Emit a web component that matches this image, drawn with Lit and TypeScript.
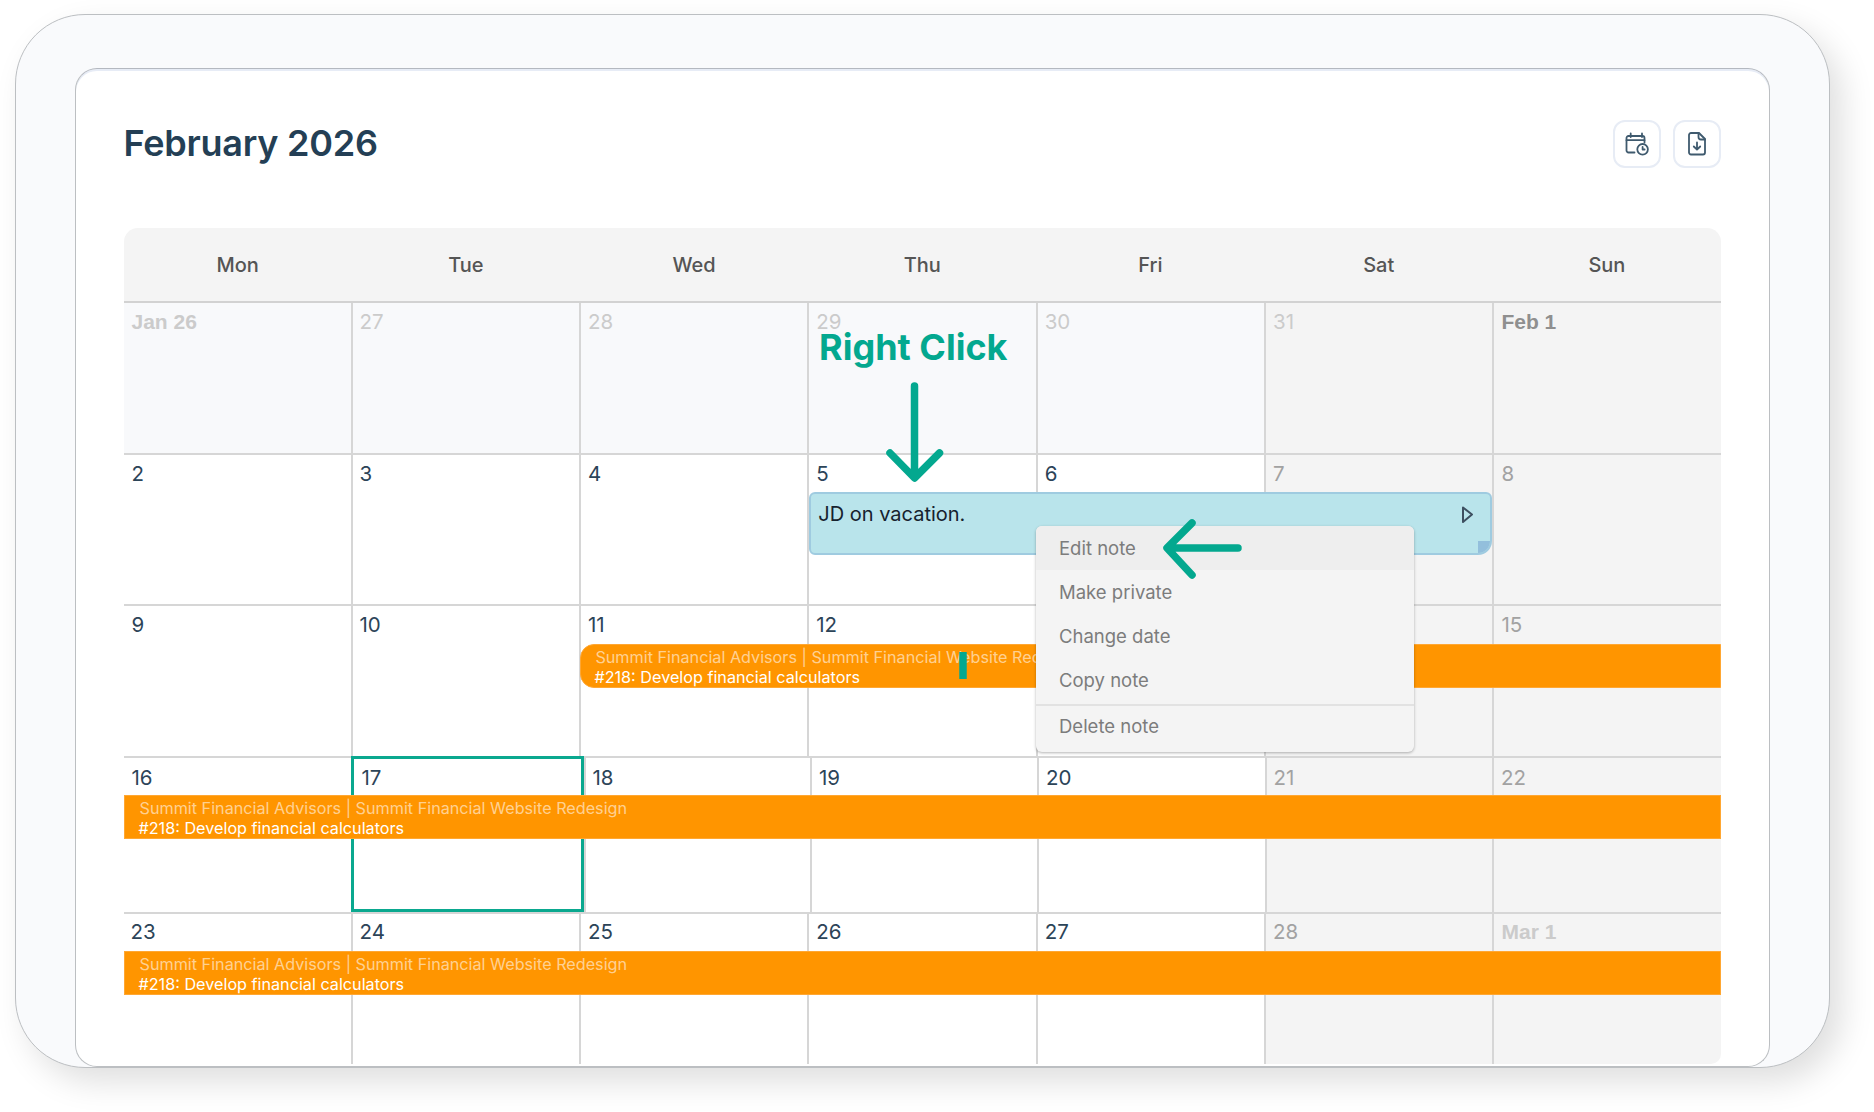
import { html, css, LitElement } from 'lit';
import { customElement } from 'lit/decorators.js';
import { classMap } from 'lit/directives/class-map.js';

type Day = { label: string; tone?: 'muted' | 'weekend' | 'lead'; bold?: boolean; shade?: 'prev' | 'end'; today?: boolean };

const DAYS = ['Mon', 'Tue', 'Wed', 'Thu', 'Fri', 'Sat', 'Sun'];
const MENU = ['Edit note', 'Make private', 'Change date', 'Copy note'];

const wk = (n: number): Day[] =>
  Array.from({ length: 7 }, (_, i) => ({
    label: String(n + i),
    ...(i > 4 ? { tone: 'weekend' as const, shade: 'end' as const } : {}),
  }));

const WEEKS: Day[][] = [
  [
    { label: 'Jan 26', tone: 'muted', bold: true, shade: 'prev' },
    { label: '27', tone: 'muted', shade: 'prev' },
    { label: '28', tone: 'muted', shade: 'prev' },
    { label: '29', tone: 'muted', shade: 'prev' },
    { label: '30', tone: 'muted', shade: 'prev' },
    { label: '31', tone: 'muted', shade: 'end' },
    { label: 'Feb 1', tone: 'lead', bold: true, shade: 'end' },
  ],
  wk(2),
  wk(9),
  wk(16).map((d) => (d.label === '17' ? { ...d, today: true } : d)),
  [...wk(23).slice(0, 6), { label: 'Mar 1', tone: 'muted', bold: true, shade: 'end' }],
];

@customElement('app-root')
export class AppRoot extends LitElement {
  static styles = css`
    :host {
      display: block;
      width: 1874px;
      height: 1112px;
      background: #fff;
      font-family: Inter, 'Liberation Sans', sans-serif;
      overflow: hidden;
    }

    .stage {
      position: relative;
      padding: 14px 0 0 15px;
    }

    .frame {
      box-sizing: border-box;
      width: 1815px;
      height: 1054px;
      padding: 53px 59px 0;
      background: #f9fafc;
      border: 1px solid #bcbfc2;
      border-radius: 70px;
      box-shadow: 12px 14px 32px rgba(0, 0, 0, 0.13);
    }

    .card {
      box-sizing: border-box;
      height: 999px;
      padding: 51px 47.5px 0;
      background: #fff;
      border: 1px solid #bcbfc2;
      border-top-color: #b4b8c0;
      box-shadow: inset 0 2px 0 #e7ecf6;
      border-radius: 22px;
      overflow: hidden;
    }

    .head {
      display: flex;
      align-items: center;
      justify-content: space-between;
      width: 1597.5px;
      height: 48px;
      margin-bottom: 60px;
    }

    h1 {
      margin: -3px 0 0;
      font-size: 36px;
      font-weight: 600;
      letter-spacing: -0.25px;
      color: #243f55;
    }

    .tools {
      display: flex;
      gap: 12px;
    }

    .tool {
      box-sizing: border-box;
      display: flex;
      align-items: center;
      justify-content: center;
      width: 48px;
      height: 48px;
      border: 2px solid #e7ecf5;
      border-radius: 12px;
      background: #fff;
    }

    .tool svg {
      width: 24px;
      height: 24px;
      fill: none;
      stroke: #3f5a6e;
      stroke-width: 1.8;
      stroke-linecap: round;
      stroke-linejoin: round;
    }

    .calendar {
      position: relative;
      width: 1597.5px;
      height: 836px;
      border-radius: 14px 14px 10px 10px;
      overflow: hidden;
      box-sizing: border-box;
    }

    .dow {
      display: grid;
      grid-template-columns: repeat(7, 1fr);
      height: 75px;
      background: #f4f4f4;
      border-bottom: 2px solid #d2d2d2;
      box-sizing: border-box;
    }

    .dow span {
      display: flex;
      align-items: center;
      justify-content: center;
      font-size: 20px;
      font-weight: 500;
      color: #555;
    }

    .week {
      display: grid;
      grid-template-columns: 227px repeat(6, 228.4px);
      height: 151.5px;
      box-sizing: border-box;
      border-bottom: 2px solid #d6d6d6;
    }

    .week.has-today {
      grid-template-columns: 227px 233px 226.5px 227px 227.5px 227.5px 229px;
      height: 156px;
    }

    .week.last {
      height: 152px;
      border-bottom: 2px solid #dcdcdc;
    }

    .cell {
      grid-row: 1;
      box-sizing: border-box;
      padding: 6px 7px;
      border-left: 2px solid #d6d6d6;
      background: #fff;
      font-size: 20.5px;
      line-height: 26px;
      color: #2c4458;
    }

    .has-today .cell { padding-top: 7px; }
    .last .cell { padding-top: 5px; }

    .cell:nth-child(1) { grid-column: 1; border-left: 0; padding-left: 8px; }
    .last .cell:nth-child(1) { padding-left: 7px; }
    .cell:nth-child(2) { grid-column: 2; }
    .cell:nth-child(3) { grid-column: 3; }
    .cell:nth-child(4) { grid-column: 4; }
    .cell:nth-child(5) { grid-column: 5; }
    .cell:nth-child(6) { grid-column: 6; }
    .cell:nth-child(7) { grid-column: 7; }

    .cell.prev { background: #f8f9fb; }
    .cell.end { background: #f4f4f4; }
    .cell.muted { color: #cbcbcb; }
    .cell.weekend { color: #a2a2a2; }
    .cell.lead { color: #8f8f8f; }
    .cell.bold { font-family: 'Liberation Sans', sans-serif; font-weight: 700; font-size: 21px; }

    .has-today .cell.today {
      border: 3px solid #0aa88f;
      padding: 6px 8px;
      margin-top: -1.5px;
      z-index: 1;
    }

    .bar {
      grid-row: 1;
      grid-column: 1 / -1;
      z-index: 2;
      align-self: start;
      box-sizing: border-box;
      height: 44px;
      margin-top: 37.5px;
      padding: 2px 0 0 14px;
      background: #ff9500;
      border: 1px solid #ffa733;
      font-size: 16.2px;
      line-height: 20px;
      white-space: nowrap;
      overflow: hidden;
      color: #fff;
    }

    .bar small {
      display: block;
      font-size: inherit;
      padding-left: 1px;
      color: rgba(255, 255, 255, 0.58);
    }

    .bar.tail {
      grid-column: 3 / -1;
      margin-left: 1.5px;
      padding-left: 13px;
      border-radius: 14px 0 0 14px;
    }

    .note {
      grid-row: 1;
      grid-column: 4 / 7;
      z-index: 2;
      position: relative;
      align-self: start;
      box-sizing: border-box;
      height: 63px;
      margin: 37.5px 0 0 2px;
      padding: 7.5px 7px;
      background: #b9e4eb;
      border: 2px solid #9fcbe0;
      border-radius: 6px 6px 14px 6px;
      font-size: 20px;
      line-height: 24px;
      color: #16222e;
      overflow: hidden;
    }

    .note svg {
      position: absolute;
      right: 17px;
      top: 12px;
      width: 12px;
      height: 18px;
      fill: none;
      stroke: #3d4f60;
      stroke-width: 2;
      stroke-linejoin: round;
    }

    .fold {
      position: absolute;
      right: -2px;
      bottom: -2px;
      width: 14px;
      height: 14px;
      background: #93bfdc;
    }

    .menu {
      position: absolute;
      z-index: 3;
      left: 912.5px;
      top: 298px;
      box-sizing: border-box;
      width: 378px;
      background: #f4f4f4;
      border-radius: 6px;
      box-shadow: 0 1px 3px rgba(0, 0, 0, 0.3);
      overflow: hidden;
      font-size: 18.5px;
      color: #7c7c7c;
    }

    .menu div {
      display: flex;
      align-items: center;
      height: 44px;
      padding-left: 23px;
    }

    .menu .on { background: #eee; }

    .menu .sep {
      height: 48px;
      margin-top: 2px;
      padding-bottom: 6px;
      border-top: 2px solid #e2e2e2;
      box-sizing: border-box;
    }

    .callout {
      position: absolute;
      z-index: 4;
      left: 819px;
      top: 325px;
      font-size: 36px;
      line-height: 44px;
      font-weight: 700;
      color: #03a88f;
    }

    .marks {
      position: absolute;
      z-index: 4;
      left: 0;
      top: 0;
      width: 1874px;
      height: 1112px;
      pointer-events: none;
      fill: none;
      stroke: #03a88f;
      stroke-width: 7.5;
      stroke-linejoin: round;
      stroke-linecap: round;
    }
  `;

  private renderBar(tail = false) {
    return html`<div class=${classMap({ bar: true, tail })}>
      <small>Summit Financial Advisors | Summit Financial Website Redesign</small>
      #218: Develop financial calculators
    </div>`;
  }

  private renderWeek(days: Day[], index: number) {
    return html`<div class=${classMap({ week: true, 'has-today': index === 3, last: index === 4 })}>
      ${days.map(
        (d) => html`<div
          class=${classMap({
            cell: true,
            today: !!d.today,
            bold: !!d.bold,
            [d.tone ?? 'plain']: true,
            [d.shade ?? 'day']: true,
          })}
        >
          ${d.label}
        </div>`,
      )}
      ${index === 1
        ? html`<div class="note">
            JD on vacation.
            <svg viewBox="0 0 12 18"><path d="M2 1.5L11 8.5L2 16Z" /></svg>
            <span class="fold"></span>
          </div>`
        : ''}
      ${index === 2 ? this.renderBar(true) : ''}
      ${index > 2 ? this.renderBar() : ''}
    </div>`;
  }

  render() {
    return html`
      <div class="stage">
        <div class="frame">
          <div class="card">
            <div class="head">
              <h1>February 2026</h1>
              <div class="tools">
                <div class="tool">
                  <svg viewBox="0 0 24 24">
                    <path d="M9.5 20.5h-6a2 2 0 0 1-2-2V6a2 2 0 0 1 2-2h14a2 2 0 0 1 2 2v4.5" />
                    <path d="M5.7 1.5V5M17 1.5V5M1.5 8.2h18" />
                    <circle cx="17.6" cy="17.3" r="5.3" />
                    <path d="M17.6 15v2.5h2" />
                  </svg>
                </div>
                <div class="tool">
                  <svg viewBox="0 0 24 24">
                    <path d="M6 1h8l6 6v13.5a2 2 0 0 1-2 2H6a2 2 0 0 1-2-2V3a2 2 0 0 1 2-2z" />
                    <path d="M13.5 1v4a2.5 2.5 0 0 0 2.5 2.5h4" />
                    <path d="M12 10.5v7M8.8 14.5l3.2 3.2 3.2-3.2" />
                  </svg>
                </div>
              </div>
            </div>
            <div class="calendar">
              <div class="dow">${DAYS.map((d) => html`<span>${d}</span>`)}</div>
              ${WEEKS.map((w, i) => this.renderWeek(w, i))}
              <div class="menu">
                ${MENU.map((m, i) => html`<div class=${classMap({ on: i === 0 })}>${m}</div>`)}
                <div class="sep">Delete note</div>
              </div>
            </div>
          </div>
        </div>
        <div class="callout">Right Click</div>
        <svg class="marks" viewBox="0 0 1874 1112">
          <path d="M914.5 386V476M890 453l24.5 25 25-25" />
          <path d="M1238 548H1168M1192 523l-25 25 25 27" />
          <path d="M963 652V679" stroke-linecap="butt" />
        </svg>
      </div>
    `;
  }
}
